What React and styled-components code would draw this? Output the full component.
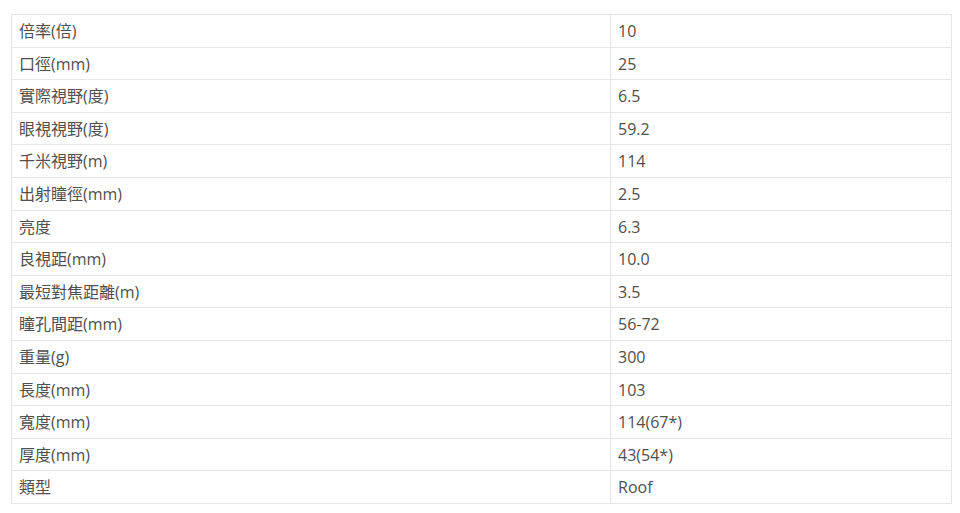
import React from 'react';
import styled, { createGlobalStyle } from 'styled-components';

const specs = [
  ['倍率(倍)', '10'],
  ['口徑(mm)', '25'],
  ['實際視野(度)', '6.5'],
  ['眼視視野(度)', '59.2'],
  ['千米視野(m)', '114'],
  ['出射瞳徑(mm)', '2.5'],
  ['亮度', '6.3'],
  ['良視距(mm)', '10.0'],
  ['最短對焦距離(m)', '3.5'],
  ['瞳孔間距(mm)', '56-72'],
  ['重量(g)', '300'],
  ['長度(mm)', '103'],
  ['寬度(mm)', '114(67*)'],
  ['厚度(mm)', '43(54*)'],
  ['類型', 'Roof'],
];

const GlobalStyle = createGlobalStyle`
  body {
    margin: 0;
    background: #ffffff;
    font-family: "Open Sans", "Noto Sans CJK TC", sans-serif;
  }
`;

const Page = styled.div`
  padding: 14px 9px 0 11px;
`;

const Table = styled.table`
  width: 941px;
  border-collapse: collapse;
  border: 1px solid #e6e6e6;
  color: #505050;
  font-size: 16px;
  table-layout: fixed;
`;

const Cell = styled.td`
  border: 1px solid #e6e6e6;
  padding: 4px 7px 2px;
  height: 25.6px;
  line-height: 25.6px;
  font-family: "Open Sans", "Noto Sans CJK TC", sans-serif;
  font-size: 16px;
  width: ${(p) => (p.$label ? '584px' : 'auto')};
  white-space: nowrap;
`;

export default function App() {
  return (
    <Page>
      <GlobalStyle />
      <Table>
        <tbody>
          {specs.map(([label, value]) => (
            <tr key={label}>
              <Cell $label>{label}</Cell>
              <Cell>{value}</Cell>
            </tr>
          ))}
        </tbody>
      </Table>
    </Page>
  );
}
